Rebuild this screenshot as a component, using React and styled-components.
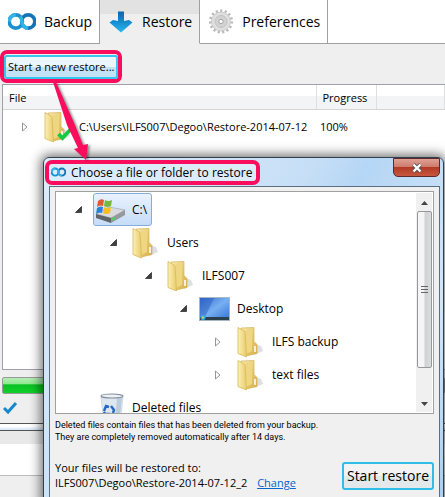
import React from 'react'
import styled, { createGlobalStyle } from 'styled-components'

const GlobalStyle = createGlobalStyle`
  * {
    box-sizing: border-box;
  }
  body {
    margin: 0;
    overflow: hidden;
    background: #efefef;
    color: #000;
    font-family: "Open Sans", "Noto Sans", sans-serif;
    font-size: 12px;
    line-height: 16px;
  }
  button {
    font-family: inherit;
    color: inherit;
    cursor: pointer;
  }
  svg {
    flex: none;
  }
`

const Page = styled.div`
  position: relative;
  min-height: 100vh;
  overflow: hidden;
`

/* main window */

const Tabs = styled.nav`
  display: flex;
  height: 44px;
  background: #fff;
`

const Tab = styled.button`
  display: flex;
  align-items: center;
  gap: 8px;
  padding: 0 7px 0 8px;
  border: 0;
  border-right: 1px solid #a0a0a0;
  border-bottom: 1px solid ${p => (p.$active ? '#efefef' : '#a0a0a0')};
  background: ${p => (p.$active ? 'linear-gradient(#e2e2e2 0 14px, #efefef 14px)' : '#fff')};
  font-size: 14px;
  line-height: 20px;
  white-space: nowrap;

  svg {
    min-width: 26px;
  }
`

const TabFill = styled.div`
  flex: 1;
  border-bottom: 1px solid #a0a0a0;
`

const Toolbar = styled.div`
  display: flex;
  height: 40px;
  padding-top: 6px;
`

const Highlight = styled.div`
  display: flex;
  align-items: center;
  border: 4px solid #f90d5c;
  border-radius: 7px;
`

const Marked = styled(Highlight)`
  height: 33px;
`

const NewRestore = styled.button`
  height: 24px;
  padding: 0 2px;
  border: 2px solid #35c5ee;
  border-radius: 3px;
  background: linear-gradient(#eaf5fc 50%, #c3e2f5 50%);
  font-size: 11px;
  white-space: nowrap;
`

const TablePane = styled.div`
  height: 286px;
  margin-left: 2px;
  border: 1px solid #a0a0a8;
  border-right: 0;
  background: #fff;
`

const Table = styled.table`
  width: 100%;
  table-layout: fixed;
  border-collapse: collapse;
  font-size: 11px;

  th {
    height: 24px;
    padding: 3px 6px 0;
    border-right: 1px solid #dedfe1;
    border-bottom: 1px solid #d5d5d5;
    background: linear-gradient(#fff 45%, #f3f4f6 45%);
    font-weight: 400;
    text-align: left;
  }
  td {
    height: 36px;
    padding: 0 4px;
    white-space: nowrap;
  }
`

const Entry = styled.div`
  display: flex;
  align-items: center;
  gap: 6px;
  padding-left: 15px;

  svg:first-child {
    margin-right: 7px;
  }
`

const Progress = styled.div`
  height: 17px;
  margin: 7px 0 0 2px;
  border: 1px solid #999;
  border-radius: 2px;
  background: linear-gradient(#b5eeb5, #8fe88f 40%, #08c022 45%, #12d12b);
`

const Status = styled.div`
  display: flex;
  height: 29px;
  padding: 7px 3px;
`

const WindowEdge = styled.div`
  height: 8px;
  border-top: 1px solid #555;
  border-bottom: 1px solid #555;
  background: linear-gradient(#fff 40%, #cfe3f5);
`

const LowerPane = styled.div`
  height: 45px;
  border-top: 13px solid #e9e9e9;
  border-bottom: 1px solid #bbb;
  background: #fff;
`

/* restore dialog */

const Dialog = styled.section`
  position: absolute;
  top: 157px;
  left: 43px;
  right: 1px;
  padding: 1px 3px 6px 1px;
  border: 1px solid #32404d;
  border-radius: 6px 6px 0 0;
  background: linear-gradient(120deg, #dcebf9, #c7dff6 45%, #b5d6f5 55%, #d3e6f8 80%, #a9cff0);
  box-shadow: 0 0 12px 2px rgba(0, 0, 0, 0.6);
`

const TitleBar = styled.header`
  display: flex;
  align-items: flex-start;
  justify-content: space-between;
  height: 27px;
`

const TitleMark = styled(Highlight)`
  height: 25px;
  margin-top: 1px;
  padding: 0 4px 0 2px;
  gap: 5px;
  background: #dcebf9;
`

const Title = styled.h1`
  margin: 0;
  font-size: 12px;
  font-weight: 400;
  line-height: 16px;
  white-space: nowrap;
`

const Close = styled.button`
  display: flex;
  align-items: center;
  justify-content: center;
  width: 47px;
  height: 19px;
  margin-top: -1px;
  padding: 0;
  border: 1px solid #5c2a2a;
  border-radius: 0 0 5px 5px;
  background: linear-gradient(#dfa195, #cf7c6d 45%, #b13a25 48%, #c6573f);
`

const Client = styled.div`
  margin-left: 4px;
  padding: 4px 5px 7px;
  border: 1px solid #5c6e82;
  background: #f0f0f0;
`

const TreeBox = styled.div`
  display: flex;
  height: 223px;
  padding: 1px;
  border: 1px solid #a0a0a0;
  background: #fff;
  overflow: hidden;
`

const Tree = styled.ul`
  flex: 1;
  margin: 0;
  padding: 0;
  list-style: none;
`

const Item = styled.li`
  display: flex;
  align-items: center;
  height: 33px;
  padding-left: ${p => 14 + p.$depth * 35}px;
`

const Twist = styled.span`
  display: flex;
  justify-content: center;
  width: 14px;
  margin-right: 8px;
`

const Node = styled.span`
  display: flex;
  align-items: center;
  gap: 6px;
  height: 33px;
  padding-right: 4px;
  border: 1px solid ${p => (p.$selected ? '#84acdd' : 'transparent')};
  border-radius: 3px;
  background: ${p => (p.$selected ? 'linear-gradient(#e9f2fd, #c5dcf8)' : 'none')};
  white-space: nowrap;
`

const Scroll = styled.div`
  display: flex;
  flex-direction: column;
  align-items: center;
  width: 16px;
  background: #f0f0f0;
`

const ScrollButton = styled.button`
  width: 16px;
  height: 18px;
  padding: 0;
  border: 0;
  background: none;
  line-height: 0;
`

const Thumb = styled.div`
  display: flex;
  align-items: center;
  justify-content: center;
  width: 15px;
  height: 157px;
  margin-bottom: auto;
  border: 1px solid #979797;
  border-radius: 2px;
  background: linear-gradient(90deg, #f5f5f5 45%, #d0d1d4 55%, #dcdcdc);
`

const Note = styled.p`
  margin: 5px 0 0;
  font-family: Roboto, sans-serif;
  font-size: 9px;
  line-height: 12px;
`

const Footer = styled.footer`
  display: flex;
  justify-content: space-between;
  align-items: flex-end;
  margin-top: 17px;
`

const Target = styled.p`
  margin: 0;
  font-size: 11px;
  line-height: 15px;
  white-space: nowrap;

  a {
    margin-left: 7px;
    color: #0066cc;
  }
`

const StartRestore = styled.button`
  height: 28px;
  padding: 0 3px;
  border: 2px solid #30bde8;
  border-radius: 3px;
  background: linear-gradient(#f3f3f3 50%, #e3e8eb 50%);
  font-size: 14px;
  line-height: 20px;
  white-space: nowrap;
`

/* a red pointer from the toolbar button to the dialog title */
const Pointer = styled.svg`
  position: absolute;
  top: 82px;
  left: 50px;
  filter: drop-shadow(2px 1px 1px rgba(0, 0, 0, 0.4));
`

const LoopLogo = ({ size = 28 }) => (
  <svg width={size} height={size * 0.68} viewBox="0 0 28 19" fill="none" strokeWidth="3.6">
    <circle cx="7.800" cy="9.500" r="6.600" stroke="#1b8fcf" />
    <circle cx="20.200" cy="9.500" r="6.600" stroke="#1474b5" />
    <path d="M12.100 4.700a6.600 6.600 0 0 1 1.800 4.800c0 2 .7 3.600 2 4.800a6.600 6.600 0 0 0 4.300 1.800" stroke="#30b4e8" />
    <path d="M1.200 9.500a6.600 6.600 0 0 1 6.600-6.600" stroke="#36b3e4" />
  </svg>
)

const DownArrow = () => (
  <svg width="24" height="22" viewBox="0 0 24 22">
    <defs>
      <linearGradient id="down" x2="0" y2="1">
        <stop offset="0" stopColor="#0b67a8" />
        <stop offset="0.45" stopColor="#1686cb" />
        <stop offset="1" stopColor="#29b8ed" />
      </linearGradient>
    </defs>
    <path d="M9 0.500h6v9.500l5-1 3.500 2.500L12 21.500 0.500 11.500l3.500-2.500 5 1z" fill="url(#down)" />
  </svg>
)

const Gear = () => (
  <svg width="25" height="25" viewBox="0 0 25 25">
    <circle cx="12.500" cy="12.500" r="10.800" fill="none" stroke="#b8b8b8" strokeWidth="2.600" strokeDasharray="2.100 2.424" />
    <circle cx="12.500" cy="12.500" r="9.500" fill="#e0e0e0" stroke="#c8c8c8" />
    <circle cx="12.500" cy="12.500" r="6" fill="#d2d2d2" stroke="#c2c2c2" />
    <circle cx="12.500" cy="12.500" r="2.200" fill="#f8f8f8" stroke="#a5a5a5" />
  </svg>
)

const Folder = ({ checked }) => (
  <svg width="32" height="32" viewBox="0 0 32 32">
    <defs>
      <linearGradient id="flap" x2="1" y2="0">
        <stop offset="0" stopColor="#fbf0b4" />
        <stop offset="1" stopColor="#e9cb6c" />
      </linearGradient>
      <linearGradient id="back" x2="1" y2="1">
        <stop offset="0" stopColor="#f6eaae" />
        <stop offset="1" stopColor="#d9ad42" />
      </linearGradient>
    </defs>
    <path d="M20 29l9-4-2-5-6-2z" fill="#d0d2d7" opacity="0.7" />
    <path d="M7 2l13-0.500v14l3 3v9l-11 2.500z" fill="url(#back)" stroke="#d3b257" strokeWidth="0.700" />
    <path d="M12 4l6-1v22l-6 3z" fill="#efd680" />
    <path d="M4 1.500l7 4 1.500 25.500L4 27.500z" fill="url(#flap)" stroke="#d9b955" strokeWidth="0.800" />
    <path d="M21 20v6" stroke="#fff" strokeWidth="1.600" />
    {checked && <path d="M17.500 23l4 4 8.500-9" fill="none" stroke="#14c943" strokeWidth="3.800" />}
  </svg>
)

const Drive = () => (
  <svg width="32" height="27" viewBox="0 0 32 27">
    <path d="M2 18l13-7 16 3-14 8z" fill="#d9dbdf" stroke="#9b9da1" strokeWidth="0.600" />
    <path d="M2 18l15 4v5L2 22z" fill="#616569" />
    <path d="M17 22l14-8v5l-14 8z" fill="#95989d" />
    <path d="M18 23.500l3-1.500" stroke="#43d65b" strokeWidth="2" />
    <path d="M4 5q3-3 6-1l-1 6q-3-1.500-6 1z" fill="#e4582b" />
    <path d="M11 4q3 2 7 0l-1 6q-4 2-7 0z" fill="#76b840" />
    <path d="M3 12q3-2.500 6-1l-1 6q-3-1.500-6 1z" fill="#2c7fda" />
    <path d="M10 11q3 2 7 0l-1 6q-4 2-7 0z" fill="#f6bd24" />
  </svg>
)

const Monitor = () => (
  <svg width="32" height="26" viewBox="0 0 32 26">
    <defs>
      <linearGradient id="screen" x2="1" y2="1">
        <stop offset="0" stopColor="#2f66c8" />
        <stop offset="0.500" stopColor="#78b0f2" />
        <stop offset="1" stopColor="#2f70d4" />
      </linearGradient>
    </defs>
    <rect x="0.500" y="1.500" width="30" height="23" fill="url(#screen)" stroke="#a9b7c4" />
    <path d="M1 2h14L6 21H1z" fill="#2b60c2" opacity="0.500" />
    <path d="M1 21h29v3H1z" fill="#2a4150" />
    <circle cx="4" cy="21.500" r="2.500" fill="#35aee2" />
    <circle cx="4" cy="21.500" r="1" fill="#f1d24a" />
  </svg>
)

const Bin = () => (
  <svg width="32" height="32" viewBox="0 0 32 32">
    <path d="M7 5h22l-3 26H10z" fill="#dce7f2" stroke="#c3ced9" strokeWidth="0.700" />
    <path d="M23 6h5l-3 25h-4z" fill="#bccbdd" />
    <ellipse cx="18" cy="4" rx="11" ry="2" fill="#edf3f9" stroke="#858e97" strokeWidth="1.200" />
    <path d="M10 19l2-5 3 1M17 14l3 4-1 3M16 22h-5l-1-2" fill="none" stroke="#2765c5" strokeWidth="2.400" />
  </svg>
)

const OpenTwist = () => (
  <svg width="7" height="7" viewBox="0 0 7 7">
    <path d="M6.500 0.500v6h-6z" fill="#404040" stroke="#222" strokeWidth="0.700" />
  </svg>
)

const ClosedTwist = () => (
  <svg width="6" height="10" viewBox="0 0 6 10">
    <path d="M0.500 1l4.500 4-4.500 4z" fill="#fff" stroke="#969696" />
  </svg>
)

const icons = { drive: Drive, folder: Folder, monitor: Monitor, bin: Bin }

const tree = [
  { name: 'C:\\', icon: 'drive', depth: 0, twist: 'open', selected: true },
  { name: 'Users', icon: 'folder', depth: 1, twist: 'open' },
  { name: 'ILFS007', icon: 'folder', depth: 2, twist: 'open' },
  { name: 'Desktop', icon: 'monitor', depth: 3, twist: 'open' },
  { name: 'ILFS backup', icon: 'folder', depth: 4, twist: 'closed' },
  { name: 'text files', icon: 'folder', depth: 4, twist: 'closed' },
  { name: 'Deleted files', icon: 'bin', depth: 0 },
]

function TreeItem({ item }) {
  const Icon = icons[item.icon]
  return (
    <Item $depth={item.depth}>
      <Twist>
        {item.twist === 'open' && <OpenTwist />}
        {item.twist === 'closed' && <ClosedTwist />}
      </Twist>
      <Node $selected={item.selected}>
        <Icon />
        {item.name}
      </Node>
    </Item>
  )
}

function RestoreDialog() {
  return (
    <Dialog role="dialog" aria-labelledby="dialog-title">
      <TitleBar>
        <TitleMark>
          <LoopLogo size={15} />
          <Title id="dialog-title">Choose a file or folder to restore</Title>
        </TitleMark>
        <Close aria-label="Close">
          <svg width="12" height="10" viewBox="0 0 12 10">
            <path d="M2.500 1.500l7 7M9.500 1.500l-7 7" stroke="#54545c" strokeWidth="4" />
            <path d="M2.500 1.500l7 7M9.500 1.500l-7 7" stroke="#fff" strokeWidth="2.400" />
          </svg>
        </Close>
      </TitleBar>
      <Client>
        <TreeBox>
          <Tree>
            {tree.map(item => (
              <TreeItem key={item.name} item={item} />
            ))}
          </Tree>
          <Scroll>
            <ScrollButton aria-label="Scroll up">
              <svg width="7" height="4"><path d="M0 4l3.500-4L7 4z" fill="#444" /></svg>
            </ScrollButton>
            <Thumb>
              <svg width="7" height="8"><path d="M0 0.500h7M0 3.500h7M0 6.500h7" stroke="#666" /></svg>
            </Thumb>
            <ScrollButton aria-label="Scroll down">
              <svg width="7" height="4"><path d="M0 0l3.500 4L7 0z" fill="#444" /></svg>
            </ScrollButton>
          </Scroll>
        </TreeBox>
        <Note>
          Deleted files contain files that has been deleted from your backup.
          <br />
          They are completely removed automatically after 14 days.
        </Note>
        <Footer>
          <Target>
            Your files will be restored to:
            <br />
            ILFS007\Degoo\Restore-2014-07-12_2 <a href="#change">Change</a>
          </Target>
          <StartRestore>Start restore</StartRestore>
        </Footer>
      </Client>
    </Dialog>
  )
}

function App() {
  return (
    <Page>
      <GlobalStyle />
      <Tabs>
        <Tab><LoopLogo />Backup</Tab>
        <Tab $active><DownArrow />Restore</Tab>
        <Tab><Gear />Preferences</Tab>
        <TabFill />
      </Tabs>
      <Toolbar>
        <Marked>
          <NewRestore>Start a new restore...</NewRestore>
        </Marked>
      </Toolbar>
      <TablePane>
        <Table>
          <colgroup>
            <col width="313" />
            <col width="60" />
            <col />
          </colgroup>
          <thead>
            <tr>
              <th>File</th>
              <th>Progress</th>
              <th aria-label="More" />
            </tr>
          </thead>
          <tbody>
            <tr>
              <td>
                <Entry>
                  <ClosedTwist />
                  <Folder checked />
                  C:\Users\ILFS007\Degoo\Restore-2014-07-12
                </Entry>
              </td>
              <td>100%</td>
              <td />
            </tr>
          </tbody>
        </Table>
      </TablePane>
      <Progress role="progressbar" aria-label="Restore progress" aria-valuenow={100} />
      <Status>
        <svg width="14" height="14" viewBox="0 0 14 14">
          <path d="M1 7l4 4 8-9" fill="none" stroke="#1688cc" strokeWidth="3" />
        </svg>
      </Status>
      <WindowEdge />
      <LowerPane />
      <RestoreDialog />
      <Pointer width="42" height="80" viewBox="0 0 42 80">
        <path d="M3 0h3l19 43 8 20 5-1-2 16-12-11 4-1-11-23z" fill="#f90d5c" />
      </Pointer>
    </Page>
  )
}

export default App
